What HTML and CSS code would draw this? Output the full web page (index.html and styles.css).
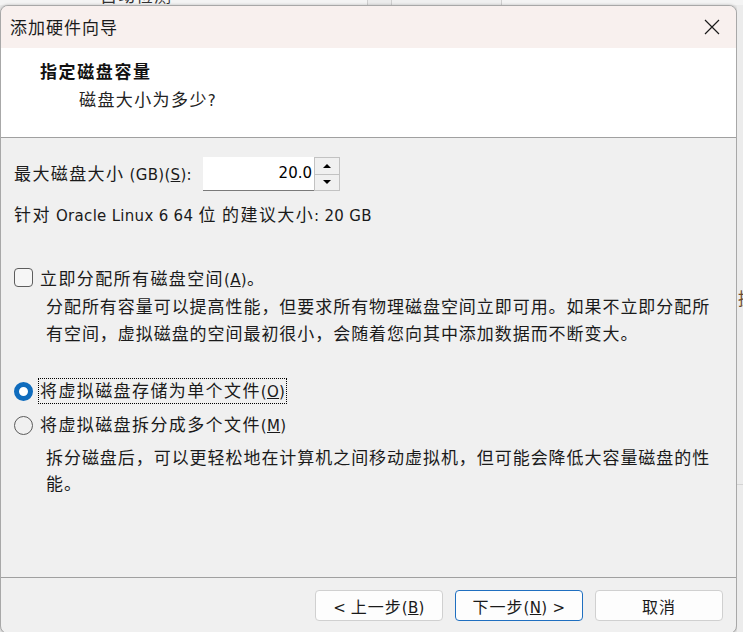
FILE: index.html
```html
<!DOCTYPE html>
<html lang="zh-CN">
<head>
<meta charset="utf-8">
<title>添加硬件向导</title>
<link rel="stylesheet" href="styles.css">
</head>
<body>
<div class="desktop">
  <div class="behind">
    <div class="bcol bcol1"><span class="btext">自动检测</span></div>
    <div class="bcol bcol2"></div>
    <div class="bcol bcol3"></div>
  </div>
  <div class="stage">
    <div class="dialog">
      <div class="titlebar">
        <span class="title">添加硬件向导</span>
        <span class="close" aria-label="关闭">
          <svg width="16" height="16" viewBox="0 0 16 16"><path d="M1 1L15 15M15 1L1 15" stroke="#1a1a1a" stroke-width="1.2" fill="none"/></svg>
        </span>
      </div>
      <div class="header">
        <div class="h-title">指定磁盘容量</div>
        <div class="h-sub">磁盘大小为多少<span class="l">?</span></div>
      </div>
      <div class="body">
        <div class="size-row">
          <span class="size-label">最大磁盘大小 <span class="l">(GB)(<u>S</u>):</span></span>
          <div class="spin">
            <div class="spin-input">20.0</div>
            <div class="spin-btns">
              <div class="spin-btn"><span class="arrow-up"></span></div>
              <div class="spin-btn"><span class="arrow-down"></span></div>
            </div>
          </div>
        </div>
        <div class="recommend">针对 <span class="l">Oracle Linux 6 64</span> 位 的建议大小<span class="l">: 20 GB</span></div>
        <div class="check-row">
          <span class="checkbox"></span>
          <span>立即分配所有磁盘空间<span class="l">(<u>A</u>)</span>。</span>
        </div>
        <div class="desc desc1">分配所有容量可以提高性能，但要求所有物理磁盘空间立即可用。如果不立即分配所<br>有空间，虚拟磁盘的空间最初很小，会随着您向其中添加数据而不断变大。</div>
        <div class="radio-row radio-row1">
          <span class="radio on"></span>
          <span class="rlabel focus">将虚拟磁盘存储为单个文件<span class="l">(<u>O</u>)</span></span>
        </div>
        <div class="radio-row radio-row2">
          <span class="radio"></span>
          <span class="rlabel">将虚拟磁盘拆分成多个文件<span class="l">(<u>M</u>)</span></span>
        </div>
        <div class="desc desc2">拆分磁盘后，可以更轻松地在计算机之间移动虚拟机，但可能会降低大容量磁盘的性<br>能。</div>
      </div>
      <div class="footer">
        <span class="btn"><span><span class="l">&lt;</span> 上一步<span class="l">(<u>B</u>)</span></span></span>
        <span class="btn primary"><span>下一步<span class="l">(<u>N</u>) &gt;</span></span></span>
        <span class="btn"><span>取消</span></span>
      </div>
    </div>
    <div class="side">
      <div class="side-char">提</div>
      <div class="side-line"></div>
    </div>
  </div>
</div>
</body>
</html>
```
FILE: styles.css
```css
html, body {
  margin: 0;
  padding: 0;
}
body {
  background: #ebebeb;
  font-family: "Noto Sans CJK SC", "Noto Sans", sans-serif;
  color: #1a1a1a;
}
.desktop {
  width: 743px;
  height: 632px;
  overflow: hidden;
  background: #ebebeb;
}
.behind {
  height: 5px;
  overflow: hidden;
  display: flex;
  background: #f4f4f4;
}
.bcol {
  height: 5px;
  border-right: 1px solid #cfcfcf;
  box-sizing: border-box;
}
.bcol1 { width: 368px; padding-left: 100px; }
.bcol2 { width: 24px; background: #ececec; }
.bcol3 { width: 110px; background: #f0f0f0; }
.btext {
  display: block;
  margin-top: -14px;
  font-size: 17px;
  line-height: 18px;
  letter-spacing: 1px;
  color: #333;
}
.stage {
  display: flex;
  align-items: flex-start;
}
.dialog {
  flex: none;
  width: 737px;
  height: 629px;
  box-sizing: border-box;
  border: 1px solid #a8a8a8;
  border-radius: 8px;
  overflow: hidden;
  display: flex;
  flex-direction: column;
  background: #f0f0f0;
  box-shadow: 0 0 3px rgba(0, 0, 0, 0.25);
}
.titlebar {
  flex: none;
  height: 42px;
  background: #f8f0ee;
  display: flex;
  align-items: center;
  justify-content: space-between;
  padding: 0 16px 0 9px;
}
.title {
  font-size: 17px;
  letter-spacing: 1px;
  color: #1b1b1b;
  line-height: 24px;
}
.close {
  display: flex;
  width: 16px;
  height: 16px;
}
.header {
  flex: none;
  height: 89px;
  background: #fff;
  border-bottom: 1px solid #a0a0a0;
  padding-left: 39px;
}
.h-title {
  font-weight: 700;
  font-size: 17px;
  letter-spacing: 1.6px;
  line-height: 24px;
  padding-top: 11px;
  color: #111;
}
.h-sub {
  padding-left: 39px;
  margin-top: 4px;
  font-size: 17px;
  letter-spacing: 1.4px;
  line-height: 24px;
  color: #222;
}
.l {
  font-family: "DejaVu Sans", sans-serif;
  font-size: 15px;
  letter-spacing: 0.3px;
}
.body {
  flex: 1;
  padding-left: 13px;
  font-size: 17px;
  letter-spacing: 1.4px;
  color: #1a1a1a;
}
.size-row {
  display: flex;
  align-items: center;
  height: 34px;
  margin-top: 19px;
}
.size-label {
  flex: none;
  width: 189px;
  line-height: 24px;
}
.spin {
  display: flex;
}
.spin-input {
  width: 111px;
  height: 34px;
  box-sizing: border-box;
  background: #fff;
  border-bottom: 1px solid #7a7a7a;
  text-align: right;
  padding-right: 2px;
  font-family: "DejaVu Sans", sans-serif;
  font-size: 15px;
  letter-spacing: 0;
  line-height: 32px;
  color: #000;
}
.spin-btns {
  width: 26px;
  height: 34px;
  box-sizing: border-box;
  border: 1px solid #c2c2c2;
  display: flex;
  flex-direction: column;
  background: #f0f0f0;
}
.spin-btn {
  flex: 1;
  display: flex;
  align-items: center;
  justify-content: center;
}
.spin-btn + .spin-btn {
  border-top: 1px solid #c2c2c2;
}
.arrow-up {
  width: 0;
  height: 0;
  border-left: 4px solid transparent;
  border-right: 4px solid transparent;
  border-bottom: 4px solid #000;
}
.arrow-down {
  width: 0;
  height: 0;
  border-left: 4px solid transparent;
  border-right: 4px solid transparent;
  border-top: 4px solid #000;
}
.recommend {
  margin-top: 11px;
  line-height: 24px;
}
.check-row {
  display: flex;
  align-items: center;
  height: 24px;
  margin-top: 37px;
}
.checkbox {
  flex: none;
  width: 19px;
  height: 19px;
  box-sizing: border-box;
  border: 1px solid #5d5d5d;
  border-radius: 4px;
  background: #f6f6f6;
  margin-right: 7px;
}
.desc {
  padding-left: 32px;
  white-space: nowrap;
  letter-spacing: 0.95px;
}
.desc1 {
  margin-top: 3px;
  line-height: 27px;
}
.radio-row {
  display: flex;
  align-items: center;
  height: 24px;
}
.radio-row1 {
  margin-top: 33px;
}
.radio-row2 {
  margin-top: 10px;
}
.radio {
  flex: none;
  width: 19px;
  height: 19px;
  box-sizing: border-box;
  border-radius: 50%;
  border: 1px solid #5b5b5b;
  margin-right: 5px;
}
.radio.on {
  border: 5px solid #0f6cbd;
  background: #fff;
}
.rlabel {
  padding: 0 1px;
  line-height: 21px;
  border: 1px solid transparent;
}
.rlabel.focus {
  border: 1px dotted #000;
}
.desc2 {
  margin-top: 7px;
  line-height: 26px;
}
.footer {
  flex: none;
  height: 43px;
  border-top: 1px solid #a0a0a0;
  display: flex;
  justify-content: flex-end;
  gap: 12px;
  padding: 12px 13px 0 0;
}
.btn {
  width: 128px;
  height: 31px;
  box-sizing: border-box;
  border: 1px solid #d0d0d0;
  border-radius: 4px;
  background: #fdfdfd;
  display: flex;
  align-items: center;
  justify-content: center;
  font-size: 16px;
  letter-spacing: 1px;
  color: #1a1a1a;
}
.btn.primary {
  border-color: #1f6fc0;
}
.side {
  flex: none;
  width: 6px;
  height: 632px;
  overflow: hidden;
  background: #ececec;
}
.side-char {
  margin-top: 283px;
  margin-left: 1px;
  font-size: 17px;
  line-height: 20px;
  color: #6b4a2b;
}
.side-line {
  margin-top: 176px;
  height: 1px;
  background: #d4d4d4;
}
```
